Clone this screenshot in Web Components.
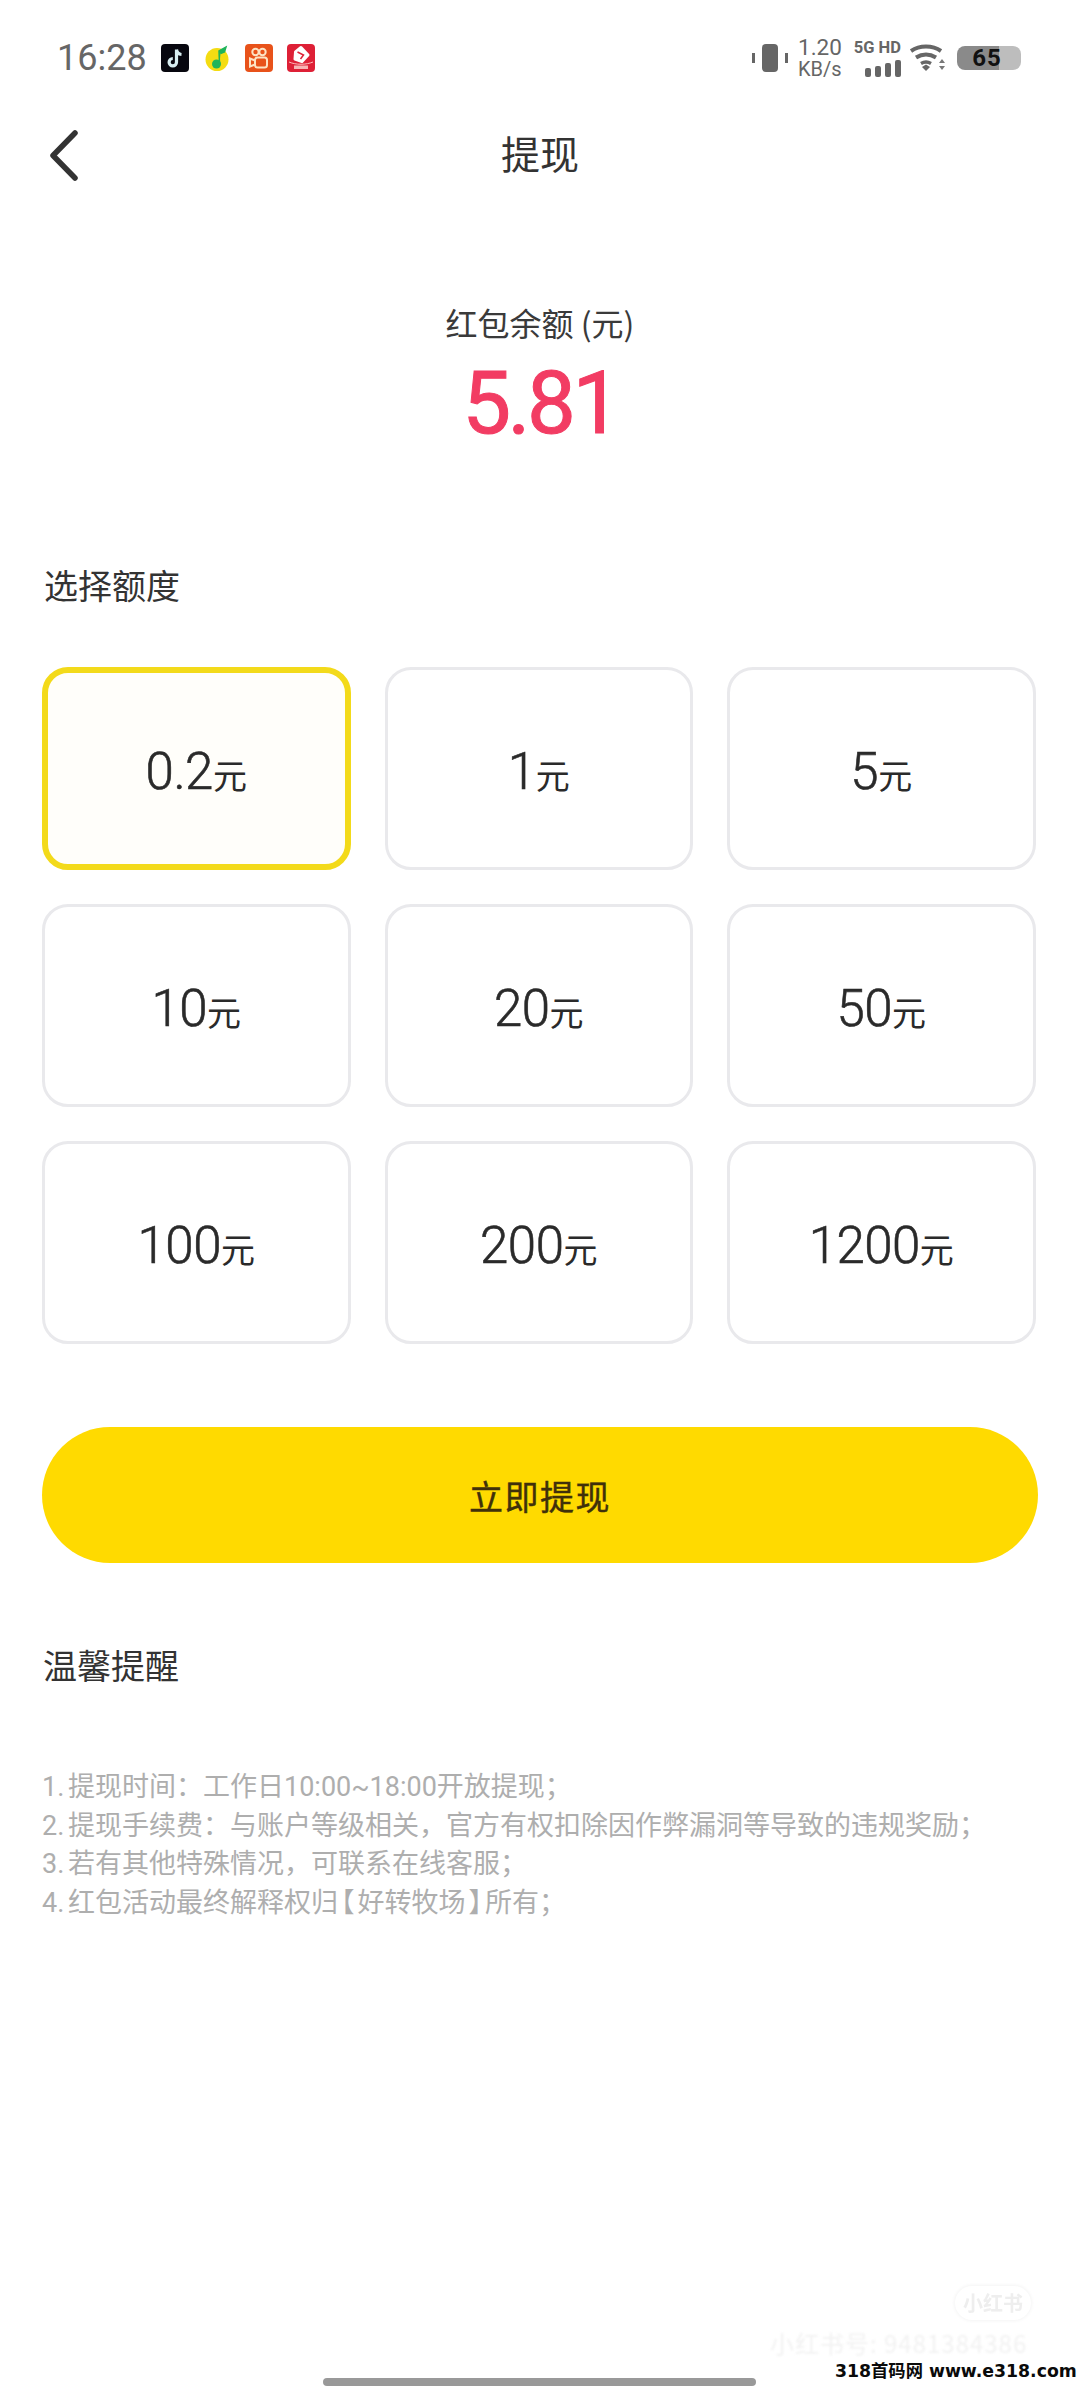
<!DOCTYPE html>
<html lang="zh">
<head>
<meta charset="utf-8">
<title>提现</title>
<style>
  html, body { margin: 0; padding: 0; background: #fff; }
  body { width: 1080px; height: 2388px; position: relative; overflow: hidden; font-family: Roboto, "Noto Sans CJK SC", sans-serif; }
  .br { font-feature-settings: "halt"; margin: 0 3px; }
</style>
</head>
<body>
<status-bar></status-bar>
<nav-bar>提现</nav-bar>
<balance-head label="红包余额 (元)" value="5.81"></balance-head>
<section-title style="margin-top:108px">选择额度</section-title>
<amount-grid>
  <amount-card selected value="0.2"></amount-card>
  <amount-card value="1"></amount-card>
  <amount-card value="5"></amount-card>
  <amount-card value="10"></amount-card>
  <amount-card value="20"></amount-card>
  <amount-card value="50"></amount-card>
  <amount-card value="100"></amount-card>
  <amount-card value="200"></amount-card>
  <amount-card value="1200"></amount-card>
</amount-grid>
<submit-button>立即提现</submit-button>
<section-title style="margin-top:78px;padding-left:43px">温馨提醒</section-title>
<tips-list>
  <div>1. 提现时间：工作日10:00~18:00开放提现；</div>
  <div>2. 提现手续费：与账户等级相关，官方有权扣除因作弊漏洞等导致的违规奖励；</div>
  <div>3. 若有其他特殊情况，可联系在线客服；</div>
  <div>4. 红包活动最终解释权归<span class="br">【</span>好转牧场<span class="br">】</span>所有；</div>
</tips-list>
<page-overlay></page-overlay>

<script>
// Barra de estado
class StatusBar extends HTMLElement {
  constructor() {
    super();
    this.attachShadow({ mode: 'open' });
    this.shadowRoot.innerHTML = `
      <style>
        :host { display: flex; align-items: center; height: 68px; padding: 24px 0 0 57px; color: #666; }
        .time { font: 400 36px Roboto, sans-serif; width: 104px; }
        .apps { display: flex; gap: 14px; }
        .apps svg { width: 28px; height: 28px; display: block; }
        .right { margin-left: auto; margin-right: 59px; display: flex; align-items: center; }
        .speed { font: 400 20px/21px Roboto, sans-serif; text-align: center; margin: 0 12px 0 10px; width: 42px; }
        .speed b { font: 400 22.500px/23px Roboto, sans-serif; display: block; }
        .net { width: 49px; margin-right: 9px; font: 700 16.500px/17px Roboto, sans-serif; text-align: right; white-space: nowrap; }
        .net svg { display: block; margin: 4px 0 0 auto; }
        .batt { width: 64px; height: 24px; margin-left: 11px; border-radius: 8px; background: linear-gradient(90deg, #8a8a8a 65%, #bdbdbd 65%); color: #111; font: 700 24px/24px Roboto, sans-serif; text-align: center; letter-spacing: 1px; padding-right: 4px; box-sizing: border-box; }
      </style>
      <div class="time">16:28</div>
      <div class="apps">
        <svg viewBox="0 0 28 28"><rect width="28" height="28" rx="4" fill="#07070f"/><path d="M15.500 5.500v12.700a3.700 3.700 0 1 1-3.700-3.700M15.500 5.500c.4 3 2.300 4.800 5 5" fill="none" stroke="#d8eef2" stroke-width="3.200"/></svg>
        <svg viewBox="0 0 28 28"><circle cx="14" cy="15.500" r="11.500" fill="#f4dc12"/><circle cx="13.500" cy="20" r="4.500" fill="#1fb45a"/><path d="M16.500 20 16 7l7-4-1.500 5-4 1.500" fill="#1fb45a" stroke="#1fb45a" stroke-width="1.500"/></svg>
        <svg viewBox="0 0 28 28"><rect width="28" height="28" rx="4" fill="#e8521a"/><circle cx="10.500" cy="8" r="3.200" fill="none" stroke="#fde3c4" stroke-width="2"/><circle cx="17.500" cy="8" r="3.200" fill="none" stroke="#fde3c4" stroke-width="2"/><rect x="10" y="13.500" width="12" height="10" rx="2.500" fill="none" stroke="#fde3c4" stroke-width="2"/><path d="m10 16.500-5-2v8l5-2" fill="none" stroke="#fde3c4" stroke-width="2"/></svg>
        <svg viewBox="0 0 28 28"><rect width="28" height="28" rx="4" fill="#de2036"/><path d="M14 3.500 21 11l-6 6.500-7-2.500.5-7z" fill="#fff" stroke="#fff" stroke-width="3" stroke-linejoin="round"/><path d="m10.500 8 6 3-3 4" fill="none" stroke="#de2036" stroke-width="1.500"/><path d="M2 18c7 3 17 3 24 0" fill="none" stroke="#fbb" stroke-width="1"/><rect x="7" y="21.500" width="14" height="3.500" fill="#f7b5b5"/></svg>
      </div>
      <div class="right">
        <svg width="36" height="28" viewBox="0 0 36 28"><rect x="10" y="0" width="16" height="28" rx="4" fill="#666"/><rect x="0" y="9" width="3" height="10" fill="#666"/><rect x="33" y="9" width="3" height="10" fill="#666"/></svg>
        <div class="speed"><b>1.20</b>KB/s</div>
        <div class="net">5G HD
          <svg width="36" height="17" viewBox="0 0 36 17"><rect x="0" y="8" width="6" height="9" rx="2" fill="#666"/><rect x="10" y="6" width="6" height="11" rx="2" fill="#666"/><rect x="20" y="3" width="6" height="14" rx="2" fill="#666"/><rect x="30" y="0" width="6" height="17" rx="2" fill="#666"/></svg>
        </div>
        <svg width="36" height="30" viewBox="0 0 36 30" fill="none" stroke="#666" stroke-width="4"><path d="M1 8c8.500-6 21.500-6 30 0"/><path d="M6 14.500c6.500-4 13.500-4 20 0"/><path d="M11 20.500c3.500-2 6.500-2 10 0" stroke-width="3.500"/><path d="m12 24 4-2.500 4 2.500-4 4z" fill="#666" stroke="none"/><path d="m29 20 3-4 3 4zM29 23l3 4 3-4z" fill="#777" stroke="none"/></svg>
        <div class="batt">65</div>
      </div>
    `;
  }
}

// Barra de navegacion
class NavBar extends HTMLElement {
  constructor() {
    super();
    this.attachShadow({ mode: 'open' });
    this.shadowRoot.innerHTML = `
      <style>
        :host { display: flex; align-items: center; justify-content: center; position: relative; height: 88px; padding-bottom: 6px; margin-top: 16px; color: #333; font: 400 39px "Noto Sans CJK SC", sans-serif; }
        svg { position: absolute; left: 47px; top: 22px; }
      </style>
      <svg width="34" height="51" viewBox="0 0 34 51" fill="none" stroke="#333" stroke-width="5.500" stroke-linecap="round" stroke-linejoin="round"><path d="M28 3 6 25.500 28 48"/></svg>
      <slot></slot>
    `;
  }
}

// Cabecera con el saldo
class BalanceHead extends HTMLElement {
  constructor() {
    super();
    this.attachShadow({ mode: 'open' });
    this.shadowRoot.innerHTML = `
      <style>
        :host { display: block; text-align: center; padding-top: 98px; }
        .label { font: 400 32px/44px "Noto Sans CJK SC", sans-serif; color: #3a3a3a; }
        .value { font: 400 87px/100px Roboto, sans-serif; -webkit-text-stroke: 1px #f23c63; color: #f23c63; margin-top: 9px; letter-spacing: -3.500px; }
      </style>
      <div class="label"></div>
      <div class="value"></div>
    `;
  }
  connectedCallback() {
    this.shadowRoot.querySelector('.label').textContent = this.getAttribute('label');
    this.shadowRoot.querySelector('.value').textContent = this.getAttribute('value');
  }
}

class SectionTitle extends HTMLElement {
  constructor() {
    super();
    this.attachShadow({ mode: 'open' });
    this.shadowRoot.innerHTML = `
      <style>
        :host { display: block; padding-left: 44px; color: #333; font: 400 34px/48px "Noto Sans CJK SC", sans-serif; }
      </style>
      <slot></slot>
    `;
  }
}

class AmountGrid extends HTMLElement {
  constructor() {
    super();
    this.attachShadow({ mode: 'open' });
    this.shadowRoot.innerHTML = `
      <style>
        :host { display: grid; grid-template-columns: repeat(3, 308.500px); grid-auto-rows: 203px; column-gap: 34px; row-gap: 34px; padding: 58px 0 0 42px; }
      </style>
      <slot></slot>
    `;
  }
}

class AmountCard extends HTMLElement {
  constructor() {
    super();
    this.attachShadow({ mode: 'open' });
    this.shadowRoot.innerHTML = `
      <style>
        :host { display: flex; align-items: center; justify-content: center; box-sizing: border-box; border: 3px solid #e9e9ec; border-radius: 26px; color: #2a2a2a; background: #fff; }
        :host([selected]) { border: 6px solid #f3da1a; background: #fffefa; }
        .wrap { display: flex; align-items: baseline; padding-top: 6px; }
        .num { font: 300 51px Roboto, sans-serif; -webkit-text-stroke: .6px #2a2a2a; letter-spacing: -.5px; }
        .unit { font: 400 34px "Noto Sans CJK SC", sans-serif; }
      </style>
      <div class="wrap"><span class="num"></span><span class="unit">元</span></div>
    `;
  }
  connectedCallback() {
    this.shadowRoot.querySelector('.num').textContent = this.getAttribute('value');
  }
}

class SubmitButton extends HTMLElement {
  constructor() {
    super();
    this.attachShadow({ mode: 'open' });
    this.shadowRoot.innerHTML = `
      <style>
        :host { display: flex; align-items: center; justify-content: center; height: 136px; margin: 83px 42px 0; border-radius: 68px; background: #ffda00; color: #40300a; font: 400 34px "Noto Sans CJK SC", sans-serif; -webkit-text-stroke: .4px #40300a; letter-spacing: 1.500px; }
      </style>
      <slot></slot>
    `;
  }
}

class TipsList extends HTMLElement {
  constructor() {
    super();
    this.attachShadow({ mode: 'open' });
    this.shadowRoot.innerHTML = `
      <style>
        :host { display: block; padding: 79px 0 0 42px; color: #aeaeae; font: 400 27px/38.500px Roboto, "Noto Sans CJK SC", sans-serif; word-spacing: -3px; }
      </style>
      <slot></slot>
    `;
  }
}

// Marca de agua y barra inferior: van encima del contenido
class PageOverlay extends HTMLElement {
  constructor() {
    super();
    this.attachShadow({ mode: 'open' });
    this.shadowRoot.innerHTML = `
      <style>
        :host { display: block; position: absolute; inset: 0; pointer-events: none; }
        .home { position: absolute; left: 323px; top: 2378px; width: 433px; height: 8px; border-radius: 4px; background: #999; }
        .pill { position: absolute; left: 955px; top: 2286px; width: 76px; height: 34px; border-radius: 17px; box-shadow: 0 0 4px #eee; color: #eeeeee; font: 700 20px/34px "Noto Sans CJK SC", sans-serif; text-align: center; filter: blur(.5px); }
        .faint { position: absolute; left: 770px; top: 2330px; color: #f2f2f2; font: 400 24px/26px "Noto Sans CJK SC", sans-serif; letter-spacing: 1px; white-space: nowrap; filter: blur(.8px); }
        .site { position: absolute; left: 835px; top: 2357px; color: #0a0a0a; font: 700 17.300px/28px "DejaVu Sans", "Noto Sans CJK SC", sans-serif; white-space: nowrap; }
      </style>
      <div class="pill">小红书</div>
      <div class="faint">小红书号: 9481384386</div>
      <div class="home"></div>
      <div class="site">318首码网 www.e318.com</div>
    `;
  }
}

customElements.define('status-bar', StatusBar);
customElements.define('nav-bar', NavBar);
customElements.define('balance-head', BalanceHead);
customElements.define('section-title', SectionTitle);
customElements.define('amount-grid', AmountGrid);
customElements.define('amount-card', AmountCard);
customElements.define('submit-button', SubmitButton);
customElements.define('tips-list', TipsList);
customElements.define('page-overlay', PageOverlay);
</script>
</body>
</html>
